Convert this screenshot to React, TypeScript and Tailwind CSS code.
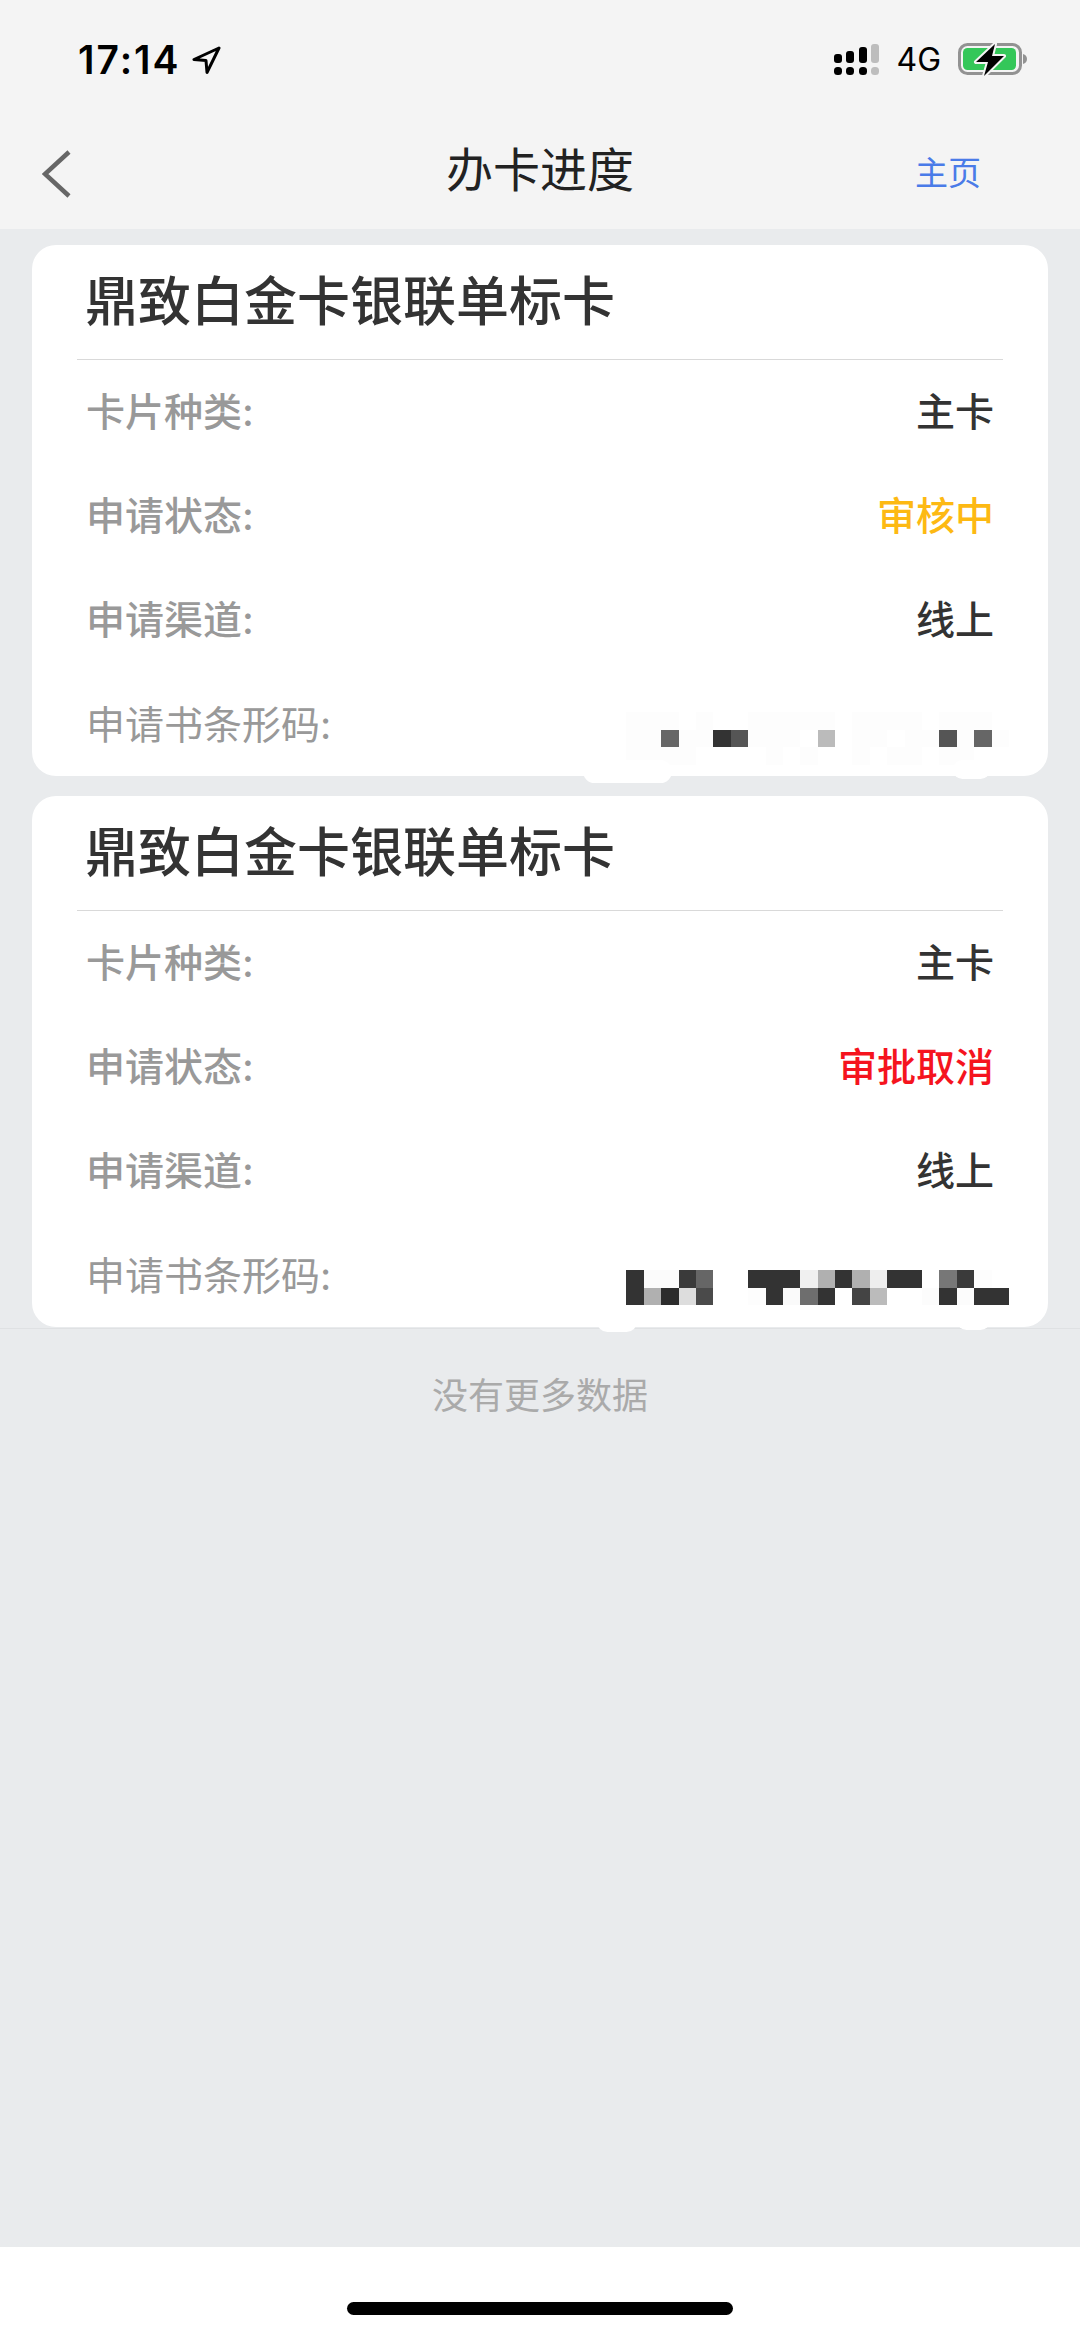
const CJK = "font-['Inter','Noto_Sans_CJK_SC',sans-serif]"

const _ = ''
const A = '#fdfdfd'

const MOSAIC_PENDING = [
  [A, A, A, _, A, _, _, A, A, A, A, A, _, A, A, A, A, _, A, A, A, _],
  [A, A, '#666666', A, A, '#333333', '#555555', A, A, A, _, '#bbbbbb', _, A, A, _, A, A, '#555555', A, '#666666', A],
  [A, A, A, A, _, _, _, _, A, _, A, _, _, A, _, A, A, _, A, A, _, _],
]

const MOSAIC_CANCELLED = [
  ['#333333', '#fbfbfb', '#fbfbfb', '#3a3a3a', '#666666', _, _, '#333333', '#333333', '#333333', '#f0f0f0', '#b0b0b0', '#333333', '#b0b0b0', '#eeeeee', '#333333', '#333333', _, '#777777', '#3a3a3a', '#fdfdfd', _],
  ['#333333', '#b0b0b0', '#2c2c2c', '#dddddd', '#4a4a4a', _, _, '#fdfdfd', '#333333', '#fafafa', '#6e6e6e', '#333333', _, '#444444', '#bbbbbb', _, _, '#fcfcfc', '#333333', '#fcfcfc', '#333333', '#333333'],
]

function Mosaic({ rows, className }: { rows: string[][]; className: string }) {
  return (
    <div className={`flex flex-col shrink-0 ${className}`}>
      {rows.map((row, y) => (
        <div key={y} className="flex h-[17.4px]">
          {row.map((color, x) => (
            <div key={x} className="w-[17.4px] h-full" style={{ backgroundColor: color || undefined }} />
          ))}
        </div>
      ))}
    </div>
  )
}

function SignalIcon() {
  return (
    <svg width="46" height="32" viewBox="0 0 46 32" className="block">
      <g fill="#000">
        <rect x="0" y="10" width="8" height="9" rx="3" />
        <rect x="12" y="7" width="8" height="12" rx="3" />
        <rect x="25" y="3" width="8" height="16" rx="3" />
        <rect x="0" y="23" width="8" height="8" rx="3.5" />
        <rect x="12" y="23" width="8" height="8" rx="3.5" />
        <rect x="25" y="23" width="8" height="8" rx="3.5" />
      </g>
      <g fill="#bdbdbd">
        <rect x="37" y="0" width="8" height="19" rx="3" />
        <rect x="37" y="23" width="8" height="8" rx="3.5" />
      </g>
    </svg>
  )
}

function BatteryIcon() {
  return (
    <svg width="70" height="34" viewBox="0 0 70 34" className="block">
      <rect x="1.5" y="1.5" width="61" height="29" rx="8" fill="none" stroke="#929292" strokeWidth="3" />
      <path d="M65 11c2.500.5 4 2.500 4 5s-1.500 4.500-4 5z" fill="#929292" />
      <rect x="5" y="5" width="53" height="22" rx="4.500" fill="#34c759" />
      <path d="M37 1 L18 19 L30 19 L26 33 L46 13 L34 13 Z" fill="#000" stroke="#f4f4f4" strokeWidth="4" strokeLinejoin="round" paintOrder="stroke" />
    </svg>
  )
}

function StatusBar() {
  return (
    <div className="flex items-start justify-between h-[120px] pt-[41px] pl-[78px] pr-[52px]">
      <div className="flex items-center gap-[10px]">
        <span className="font-['Inter',sans-serif] text-[39px] leading-[38px] font-semibold tracking-[2px] text-black">17:14</span>
        <svg width="30" height="30" viewBox="0 0 30 30" className="block">
          <path d="M28 3 L3 14.500 L15 15.500 L16 27.500 Z" fill="none" stroke="#000" strokeWidth="3" strokeLinejoin="round" />
        </svg>
      </div>
      <div className="flex items-center gap-[17px] mt-[2px]">
        <SignalIcon />
        <span className="font-['Inter',sans-serif] text-[32px] leading-[32px] text-black -ml-[1px]">4G</span>
        <BatteryIcon />
      </div>
    </div>
  )
}

function NavBar() {
  return (
    <div className="relative flex items-center justify-center h-[109px] pb-[9px]">
      <svg width="30" height="48" viewBox="0 0 30 48" className="absolute left-[42px] top-[30px]">
        <path d="M27 2 L3 24 L27 46" fill="none" stroke="#666" strokeWidth="4.500" />
      </svg>
      <span className="text-[47px] leading-[60px] text-[#222]">办卡进度</span>
      <span className="absolute left-[915px] top-[28px] text-[33px] leading-[50px] text-[#4a7be8]">主页</span>
    </div>
  )
}

function Row({ label, value, valueColor = 'text-[#333]' }: { label: string; value: string; valueColor?: string }) {
  return (
    <div className="flex items-center justify-between h-[104px] pt-[1px] pl-[54px] pr-[54px] text-[39px] font-medium">
      <span className="text-[#999]">{label}</span>
      <span className={valueColor}>{value}</span>
    </div>
  )
}

function Card({ status, statusColor, mosaic, mosaicOffset, bumps }: {
  status: string
  statusColor: string
  mosaic: string[][]
  mosaicOffset: string
  bumps: { left: string; width: string; height: string }[]
}) {
  return (
    <div className="relative bg-white rounded-[24px] h-[531px]">
      <div className="flex items-center h-[115px] pt-[2px] mx-[45px] pl-[8px] border-b border-[#d9d9d9] text-[53px] font-medium text-[#333]">
        鼎致白金卡银联单标卡
      </div>
      <Row label="卡片种类:" value="主卡" />
      <Row label="申请状态:" value={status} valueColor={statusColor} />
      <Row label="申请渠道:" value="线上" />
      <div className="flex items-center justify-between h-[97px] pt-[10px] pl-[54px] pr-[39px] text-[39px] text-[#999]">
        <span>申请书条形码:</span>
        <Mosaic rows={mosaic} className={mosaicOffset} />
      </div>
      {bumps.map((b, i) => (
        <div key={i} className={`absolute top-[515px] bg-white rounded-full ${b.left} ${b.width} ${b.height}`} />
      ))}
    </div>
  )
}

export default function App() {
  return (
    <div className={`flex flex-col h-[2337px] bg-[#e9ebed] ${CJK}`}>
      <header className="bg-[#f4f4f4]">
        <StatusBar />
        <NavBar />
      </header>

      <main className="flex-1 pt-[16px]">
        <div className="flex flex-col gap-[20px] px-[32px]">
          <Card
            status="审核中"
            statusColor="text-[#fdb913]"
            mosaic={MOSAIC_PENDING}
            mosaicOffset="mt-[26px]"
            bumps={[
              { left: 'left-[551px]', width: 'w-[89px]', height: 'h-[23px]' },
              { left: 'left-[921px]', width: 'w-[37px]', height: 'h-[19px]' },
            ]}
          />
          <Card
            status="审批取消"
            statusColor="text-[#f5141e]"
            mosaic={MOSAIC_CANCELLED}
            mosaicOffset="mt-[22px]"
            bumps={[
              { left: 'left-[565px]', width: 'w-[40px]', height: 'h-[21px]' },
              { left: 'left-[925px]', width: 'w-[33px]', height: 'h-[19px]' },
            ]}
          />
        </div>
        <div className="border-t border-[#dfe1e3] mt-[1px] pt-[43px] text-center text-[36px] leading-[48px] text-[#aaa]">
          没有更多数据
        </div>
      </main>

      <footer className="flex justify-center h-[90px] pt-[55px] bg-white">
        <div className="w-[386px] h-[13px] rounded-full bg-black" />
      </footer>
    </div>
  )
}
